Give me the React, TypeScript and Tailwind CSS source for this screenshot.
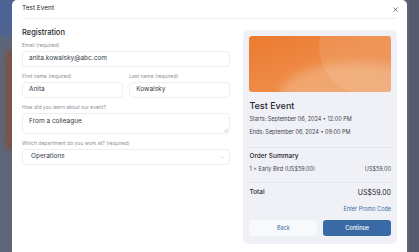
import React from "react";
import { X, ChevronDown } from "lucide-react";

const font = { fontFamily: "Inter, 'Noto Sans', sans-serif" };

function Label({ children }: { children: React.ReactNode }) {
  return <div className="mb-[2px] text-[5px] leading-[7px] text-[#8b9099]">{children}</div>;
}

function Field({ value }: { value: string }) {
  return (
    <div className="flex h-[16px] items-center rounded-[4px] border border-[#eceef1] bg-white px-[6px] text-[6.5px] text-[#343a46]">
      {value}
    </div>
  );
}

export default function App() {
  return (
    <div className="relative h-[252px] w-[419px] overflow-hidden bg-[#5f6578]" style={font}>
      {/* blurred page behind the modal */}
      <div className="absolute left-[-6px] top-[-4px] h-[40px] w-[22px] rounded-md bg-[#4d6394] blur-[3px]" />
      <div className="absolute left-[6px] top-[50px] h-[100px] w-[10px] rounded-sm bg-[#7a5446] blur-[2px]" />
      <div className="absolute right-0 top-0 h-full w-[10px] bg-[#565c6c]" />

      <div className="absolute left-[12px] top-0 h-[262px] w-[395px] rounded-[5px] bg-white">
        <div className="mx-[10px] flex h-[19px] items-center justify-between border-b border-[#eef0f3]">
          <span className="text-[6.5px] text-[#1f2530]">Test Event</span>
          <X size={7} strokeWidth={2.2} className="mr-[-2px] text-[#2a2f3a]" />
        </div>

        <div className="flex items-start gap-[13px] px-[10px]">
          <div className="w-[209px] pt-[9px]">
            <div className="mb-[3.5px] text-[7.5px] font-medium leading-[10px] text-[#1f2530]">Registration</div>
            <div className="flex flex-col gap-[6px]">
              <div>
                <Label>Email (required)</Label>
                <Field value="anita.kowalsky@abc.com" />
              </div>
              <div className="flex gap-[6px]">
                <div className="flex-1">
                  <Label>First name (required)</Label>
                  <Field value="Anita" />
                </div>
                <div className="flex-1">
                  <Label>Last name (required)</Label>
                  <Field value="Kowalsky" />
                </div>
              </div>
              <div>
                <Label>How did you learn about our event?</Label>
                <div className="relative h-[21.5px] rounded-[4px] border border-[#eceef1] px-[6px] pt-[3px] text-[6.5px] leading-[8px] text-[#343a46]">
                  From a colleague
                  <svg className="absolute bottom-[1px] right-[1px]" width="4" height="4" viewBox="0 0 4 4">
                    <path d="M4 0.5 L0.5 4 M4 2.5 L2.5 4" stroke="#9aa0aa" strokeWidth="0.6" />
                  </svg>
                </div>
              </div>
              <div>
                <Label>Which department do you work at? (required)</Label>
                <div className="flex h-[16px] items-center justify-between rounded-[4px] border border-[#eceef1] px-[8px] text-[6.5px] text-[#343a46]">
                  Operations
                  <ChevronDown size={5} strokeWidth={2} className="mr-[-4px] text-[#9aa0aa]" />
                </div>
              </div>
            </div>
          </div>

          <div className="mt-[11px] w-[154px] rounded-[6px] bg-[#f0f1f6] p-[6px] pb-[8px]">
            <div className="relative h-[56px] overflow-hidden rounded-[3px] bg-gradient-to-br from-[#ec7a2e] via-[#ee8a45] to-[#e8894c]">
              <div className="absolute left-[30px] top-[26px] h-[70px] w-[160px] rounded-[50%] bg-[#f6c9a0] opacity-45 blur-[5px]" />
              <div className="absolute left-[70px] top-[-40px] h-[100px] w-[110px] rounded-full bg-white opacity-10" />
            </div>
            <div className="mt-[8px] text-[9px] font-medium leading-[12px] text-[#1f2530]">Test Event</div>
            <div className="mt-[3px] text-[5.5px] leading-[8px] text-[#3e4450]">Starts: September 06, 2024 • 12:00 PM</div>
            <div className="mt-[5px] text-[5.5px] leading-[8px] text-[#3e4450]">Ends: September 06, 2024 • 09:00 PM</div>
            <div className="mt-[10.5px] border-t border-[#e4e6eb]" />
            <div className="mt-[4px] text-[6.5px] font-medium leading-[9px] text-[#1f2530]">Order Summary</div>
            <div className="mt-[4.5px] flex justify-between text-[5.5px] leading-[8px] text-[#3e4450]">
              <span>1 × Early Bird (US$59.00)</span>
              <span>US$59.00</span>
            </div>
            <div className="mt-[8.5px] border-t border-[#e4e6eb]" />
            <div className="mt-[5px] flex justify-between text-[6.5px] leading-[9px] text-[#1f2530]">
              <span className="font-medium">Total</span>
              <span className="text-[7px]">US$59.00</span>
            </div>
            <div className="mt-[8.5px] text-right text-[5.5px] leading-[8px] text-[#3b6aa5]">Enter Promo Code</div>
            <div className="mt-[7px] flex gap-[6px]">
              <div className="flex h-[16px] flex-1 items-center justify-center rounded-[3px] bg-[#f8f9fb] text-[5.5px] text-[#4a6a9c]">
                Back
              </div>
              <div className="flex h-[16px] flex-1 items-center justify-center rounded-[3px] bg-[#3a6aa6] text-[5.5px] font-medium text-white">
                Continue
              </div>
            </div>
          </div>
        </div>
      </div>
    </div>
  );
}
